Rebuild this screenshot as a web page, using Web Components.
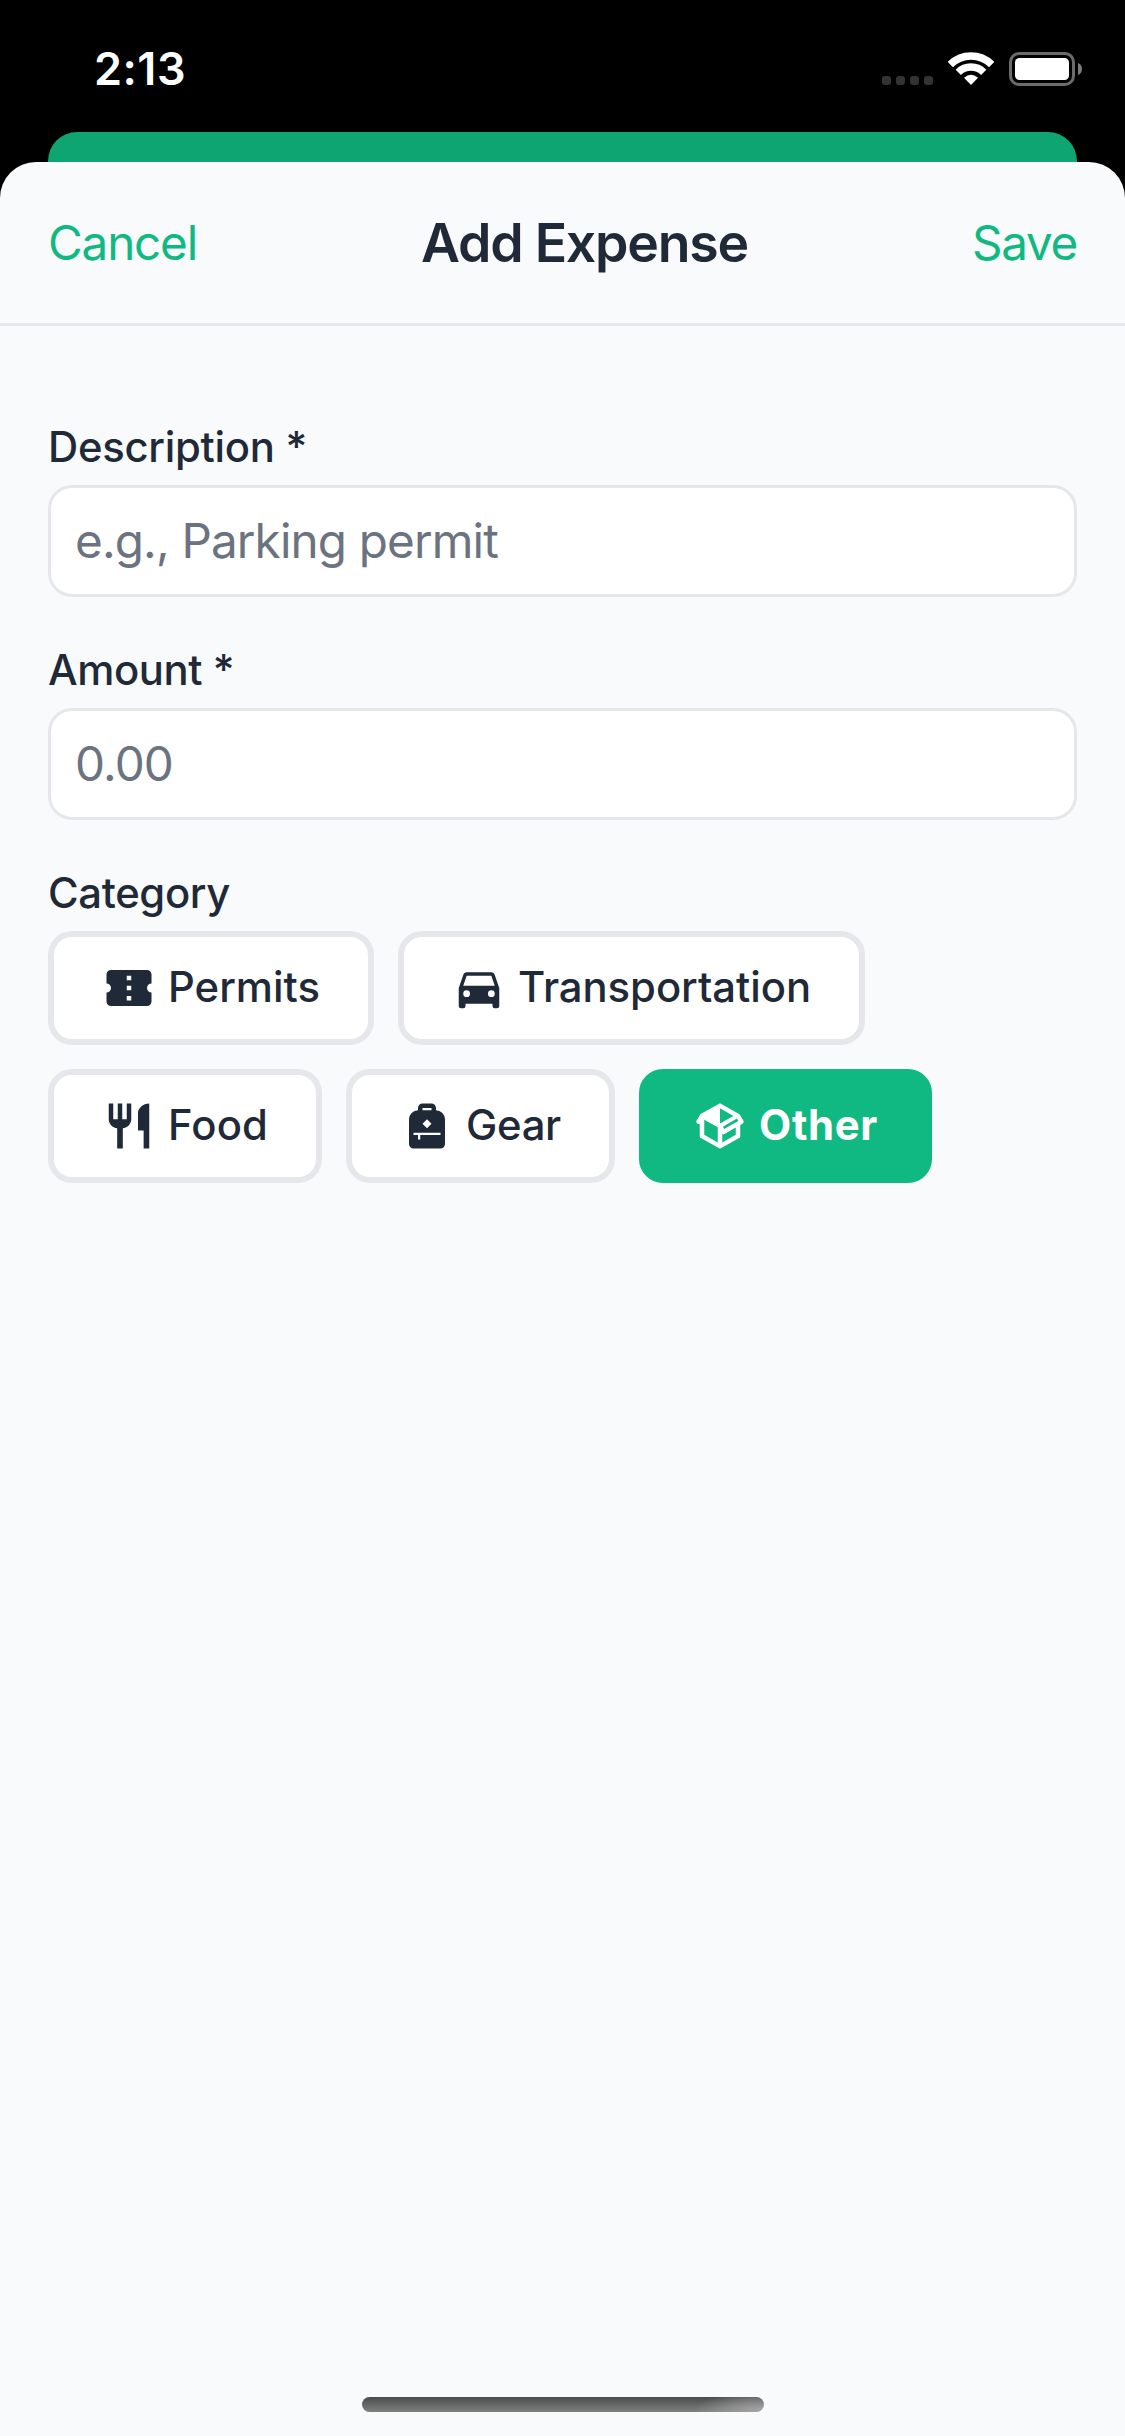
<!DOCTYPE html>
<html lang="en">
<head>
<meta charset="utf-8">
<title>Add Expense</title>
<style>
html,body{margin:0;padding:0;background:#000}
body{width:1125px;height:2436px;overflow:hidden;font-family:Inter,"Liberation Sans",sans-serif;color:#1f2937}
</style>
</head>
<body>
<expense-screen></expense-screen>
<script>
const define = (name, html, setup) => {
  const template = document.createElement('template');
  template.innerHTML = html;
  customElements.define(name, class extends HTMLElement {
    connectedCallback() {
      if (this.shadowRoot) return;
      this.attachShadow({ mode: 'open' }).append(template.content.cloneNode(true));
      if (setup) setup(this, this.shadowRoot);
    }
  });
};

const ICONS = {
  ticket: 'M13,8.5H11V6.5H13V8.5M13,13H11V11H13V13M13,17.5H11V15.5H13V17.5M22,10V6C22,4.89 21.1,4 20,4H4A2,2 0 0,0 2,6V10C3.11,10 4,10.9 4,12A2,2 0 0,1 2,14V18A2,2 0 0,0 4,20H20A2,2 0 0,0 22,18V14A2,2 0 0,1 20,12A2,2 0 0,1 22,10Z',
  car: 'M5,11L6.5,6.5H17.5L19,11M17.5,16A1.5,1.5 0 0,1 16,14.5A1.5,1.5 0 0,1 17.5,13A1.5,1.5 0 0,1 19,14.5A1.5,1.5 0 0,1 17.5,16M6.5,16A1.5,1.5 0 0,1 5,14.5A1.5,1.5 0 0,1 6.5,13A1.5,1.5 0 0,1 8,14.5A1.5,1.5 0 0,1 6.5,16M18.92,6C18.72,5.42 18.16,5 17.5,5H6.5C5.84,5 5.28,5.42 5.08,6L3,12V20A1,1 0 0,0 4,21H5A1,1 0 0,0 6,20V19H18V20A1,1 0 0,0 19,21H20A1,1 0 0,0 21,20V12L18.92,6Z',
  food: 'M11,9H9V2H7V9H5V2H3V9C3,11.12 4.66,12.84 6.75,12.97V22H9.25V12.97C11.34,12.84 13,11.12 13,9V2H11V9M16,6V14H18.5V22H21V2C18.24,2 16,4.24 16,6Z',
  bag: 'M16,5V4C16,2.89 15.1,2 14,2H10A2,2 0 0,0 8,4V5A4,4 0 0,0 4,9V20A2,2 0 0,0 6,22H18A2,2 0 0,0 20,20V9A4,4 0 0,0 16,5M10,4H14V5H10V4M12,9L14,11L12,13L10,11L12,9M18,16H9V18H8V16H6V15H18V16Z',
  box: 'M2,10.96C1.5,10.68 1.35,10.07 1.63,9.59L3.13,7C3.24,6.8 3.41,6.66 3.6,6.58L11.43,2.18C11.59,2.06 11.79,2 12,2C12.21,2 12.41,2.06 12.57,2.18L20.47,6.62C20.66,6.72 20.82,6.88 20.91,7.08L22.36,9.6C22.64,10.08 22.47,10.69 22,10.96L21,11.54V16.5C21,16.88 20.79,17.21 20.47,17.38L12.57,21.82C12.41,21.94 12.21,22 12,22C11.79,22 11.59,21.94 11.43,21.82L3.53,17.38C3.21,17.21 3,16.88 3,16.5V10.96C2.7,11.13 2.32,11.14 2,10.96M12,4.15V4.15L12,10.85V10.85L17.96,7.5L12,4.15M5,15.91L11,19.29V12.58L5,9.21V15.91M19,15.91V12.69L14,15.59C13.67,15.77 13.3,15.76 13,15.6V19.29L19,15.91M13.85,13.36L20.13,9.73L19.55,8.72L13.27,12.35L13.85,13.36Z'
};

/* Text run whose tracking is set so that it fills a given advance width. */
define('fit-text', `
<style>
:host{display:block;white-space:nowrap}
span{display:inline-block}
</style><span><slot></slot></span>`, (host, root) => {
  const target = +host.getAttribute('advance');
  const span = root.querySelector('span');
  const count = host.textContent.length;
  const natural = span.getBoundingClientRect().width;
  span.style.letterSpacing = ((target - natural) / count).toFixed(3) + 'px';
  host.style.width = target + 'px';
});

define('mdi-icon', `
<style>:host{display:block;width:54px;height:54px;flex:none}svg{display:block;width:54px;height:54px}</style>
<svg viewBox="0 0 24 24" fill="currentColor"><path/></svg>`, (host, root) => {
  root.querySelector('path').setAttribute('d', ICONS[host.getAttribute('name')]);
});

define('status-bar', `
<style>
:host{display:flex;justify-content:space-between;box-sizing:border-box;height:132px;padding:0 43px 0 94px;color:#fff}
.time{font-size:45px;font-weight:600;line-height:60px;margin-top:39px}
.icons{display:flex;align-items:flex-start;padding-top:52px}
.dots{display:flex;gap:5px;margin:24px 15px 0 0}
.dots i{width:9px;height:9px;border-radius:3px;background:#333}
svg{display:block}
</style>
<fit-text class="time" advance="92">2:13</fit-text>
<div class="icons">
  <div class="dots"><i></i><i></i><i></i><i></i></div>
  <svg width="46" height="34" viewBox="0 0 46 34" style="margin-right:15px">
    <g fill="none" stroke="#fff" stroke-width="7.5"><path d="M2.3 12.5A29.2 29.2 0 0 1 43.7 12.5"/><path d="M10.3 20.3A18 18 0 0 1 35.7 20.3"/></g>
    <path fill="#fff" d="M16 25.8Q23 19.8 30 25.8L23 33Z"/>
  </svg>
  <svg width="73" height="34" viewBox="0 0 73 34">
    <rect x="1.5" y="1.5" width="63" height="31" rx="8.5" fill="none" stroke="#6b6b6b" stroke-width="3"/>
    <rect x="6" y="6" width="54" height="22" rx="4.5" fill="#fff"/>
    <path d="M69 11Q73 12.5 73 17T69 23Z" fill="#7c7c7c"/>
  </svg>
</div>`);

define('sheet-header', `
<style>
:host{display:flex;align-items:center;justify-content:space-between;box-sizing:border-box;height:164px;padding:0 48px;border-bottom:3px solid #e5e7eb;line-height:70px}
.action{color:#10b981;font-size:47.6px}
.title{font-size:53.6px;font-weight:600}
</style>
<fit-text class="action" advance="149">Cancel</fit-text>
<fit-text class="title" advance="327">Add Expense</fit-text>
<fit-text class="action" advance="105">Save</fit-text>`);

define('form-field', `
<style>
:host{display:block}
.label{font-size:41.8px;font-weight:500;line-height:50px;margin-bottom:13px}
</style>
<div class="label"><slot name="label"></slot></div><slot></slot>`);

define('text-box', `
<style>
:host{display:flex;align-items:center;box-sizing:border-box;height:112px;border:3px solid #e5e7eb;border-radius:24px;background:#fff;padding:0 24px;color:#6b7280;font-size:47.6px;line-height:60px}
</style><slot></slot>`);

define('category-chip', `
<style>
:host{display:flex;align-items:center;gap:12px;box-sizing:border-box;height:114px;border:6px solid #e5e7eb;border-radius:24px;background:#fff;padding:0 48px;font-size:41.8px;font-weight:500;line-height:50px}
:host([selected]){background:#10b981;border-color:#10b981;color:#fff;font-weight:700}
.text{margin-bottom:2px}
</style><slot name="icon"></slot><div class="text"><slot></slot></div>`);

define('category-list', `
<style>:host{display:flex;flex-wrap:wrap;gap:24px}</style><slot></slot>`);

define('home-indicator', `
<style>
:host{display:block;width:402px;height:15px;border-radius:8px;background:radial-gradient(ellipse 70px 22px at 100% 100%,#a8a8a8,rgba(150,150,150,0)),linear-gradient(#4b4b4b,#7e7f7f)}
</style>`);

define('expense-screen', `
<style>
:host{display:flex;flex-direction:column;width:1125px;height:2436px;background:#000}
.behind{height:30px;margin:0 48px;border-radius:29px 29px 0 0;background:#0ea573}
.sheet{flex:1;display:flex;flex-direction:column;background:#f9fafc;border-radius:36px 36px 0 0}
.form{flex:1;display:flex;flex-direction:column;gap:48px;padding:96px 48px 0}
home-indicator{margin:0 auto 24px 362px}
</style>
<status-bar></status-bar>
<div class="behind"></div>
<div class="sheet">
  <sheet-header></sheet-header>
  <div class="form">
    <form-field><fit-text slot="label" advance="259">Description *</fit-text>
      <text-box><fit-text advance="423">e.g., Parking permit</fit-text></text-box></form-field>
    <form-field><fit-text slot="label" advance="186">Amount *</fit-text>
      <text-box><fit-text advance="98">0.00</fit-text></text-box></form-field>
    <form-field><fit-text slot="label" advance="182">Category</fit-text>
      <category-list>
        <category-chip><mdi-icon slot="icon" name="ticket"></mdi-icon><fit-text advance="152">Permits</fit-text></category-chip>
        <category-chip><mdi-icon slot="icon" name="car"></mdi-icon><fit-text advance="293">Transportation</fit-text></category-chip>
        <category-chip><mdi-icon slot="icon" name="food"></mdi-icon><fit-text advance="100">Food</fit-text></category-chip>
        <category-chip><mdi-icon slot="icon" name="bag"></mdi-icon><fit-text advance="95">Gear</fit-text></category-chip>
        <category-chip selected><mdi-icon slot="icon" name="box"></mdi-icon><fit-text advance="119">Other</fit-text></category-chip>
      </category-list></form-field>
  </div>
  <home-indicator></home-indicator>
</div>`);
</script>
</body>
</html>
